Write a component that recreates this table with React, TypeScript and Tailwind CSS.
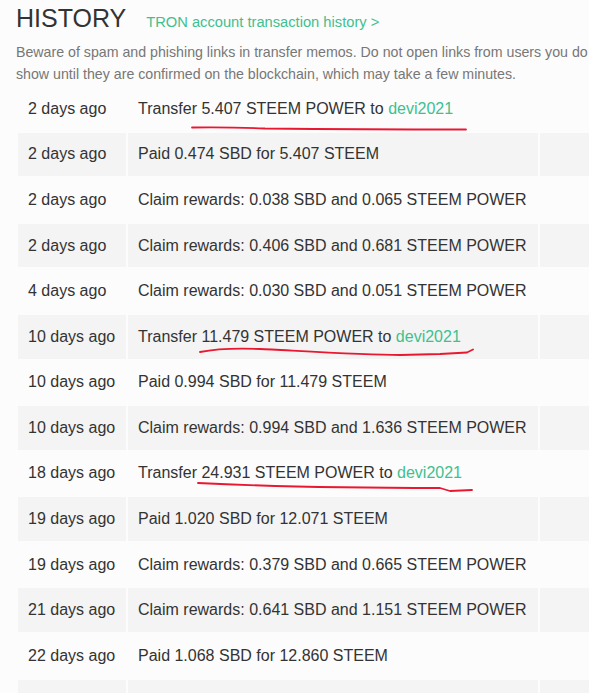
import React from 'react';

type Row = { when: string; what: React.ReactNode };

const Green: React.FC<{ children: React.ReactNode }> = ({ children }) => (
  <span className="text-[#3fc08f]">{children}</span>
);

const rows: Row[] = [
  { when: '2 days ago', what: <>Transfer 5.407 STEEM POWER to <Green>devi2021</Green></> },
  { when: '2 days ago', what: 'Paid 0.474 SBD for 5.407 STEEM' },
  { when: '2 days ago', what: 'Claim rewards: 0.038 SBD and 0.065 STEEM POWER' },
  { when: '2 days ago', what: 'Claim rewards: 0.406 SBD and 0.681 STEEM POWER' },
  { when: '4 days ago', what: 'Claim rewards: 0.030 SBD and 0.051 STEEM POWER' },
  { when: '10 days ago', what: <>Transfer 11.479 STEEM POWER to <Green>devi2021</Green></> },
  { when: '10 days ago', what: 'Paid 0.994 SBD for 11.479 STEEM' },
  { when: '10 days ago', what: 'Claim rewards: 0.994 SBD and 1.636 STEEM POWER' },
  { when: '18 days ago', what: <>Transfer 24.931 STEEM POWER to <Green>devi2021</Green></> },
  { when: '19 days ago', what: 'Paid 1.020 SBD for 12.071 STEEM' },
  { when: '19 days ago', what: 'Claim rewards: 0.379 SBD and 0.665 STEEM POWER' },
  { when: '21 days ago', what: 'Claim rewards: 0.641 SBD and 1.151 STEEM POWER' },
  { when: '22 days ago', what: 'Paid 1.068 SBD for 12.860 STEEM' },
  { when: '', what: '' },
];

// hand-drawn red marks under the transfers
const Scribbles = () => (
  <svg className="absolute left-0 top-0 pointer-events-none" width="589" height="693">
    <g fill="none" stroke="#ea1730" strokeWidth="1.8" strokeLinecap="round" strokeLinejoin="round">
      <path d="M192 127.5 Q230 127 265 128.5 Q360 129.5 466 129.5" />
      <path d="M200 352 C215 349 235 348 260 349 S 360 355 400 355 L440 354 L467 352.5 L473 349.5" />
      <path d="M198 483 Q300 488 440 488 L450 491 L472 490" />
    </g>
  </svg>
);

export default function App() {
  return (
    <div
      className="relative w-[589px] h-[693px] overflow-hidden bg-[#fcfcfc] text-[#333]"
      style={{ fontFamily: '"Liberation Sans", Arial, sans-serif' }}
    >
      <div className="w-[900px] pl-4">
        <div className="mt-[3px] flex items-baseline gap-[20px]">
          <h2 className="text-[25px] leading-[30px] font-normal text-[#333]">HISTORY</h2>
          <span className="text-[14.7px] text-[#3fc08f]">TRON account transaction history &gt;</span>
        </div>
        <p className="mt-[8px] text-[14.2px] leading-[22px] text-[#777] whitespace-nowrap">
          Beware of spam and phishing links in transfer memos. Do not open links from users you do not trust. Do not provide your private keys to any third party websites. Transactions will not
          <br />
          show until they are confirmed on the blockchain, which may take a few minutes.
        </p>
        <table className="border-separate border-spacing-[2px] text-[16px]">
          <tbody>
            {rows.map((r, i) => {
              const bg = i % 2 === 1 ? 'bg-[#f4f4f4]' : '';
              return (
                <tr key={i} className="h-[43.58px]">
                  <td className={`w-[108px] pl-[10px] whitespace-nowrap ${bg}`}>{r.when}</td>
                  <td className={`w-[410px] pl-[10px] whitespace-nowrap ${bg}`}>{r.what}</td>
                  <td className={`w-[200px] ${bg}`}></td>
                </tr>
              );
            })}
          </tbody>
        </table>
      </div>
      <Scribbles />
    </div>
  );
}
